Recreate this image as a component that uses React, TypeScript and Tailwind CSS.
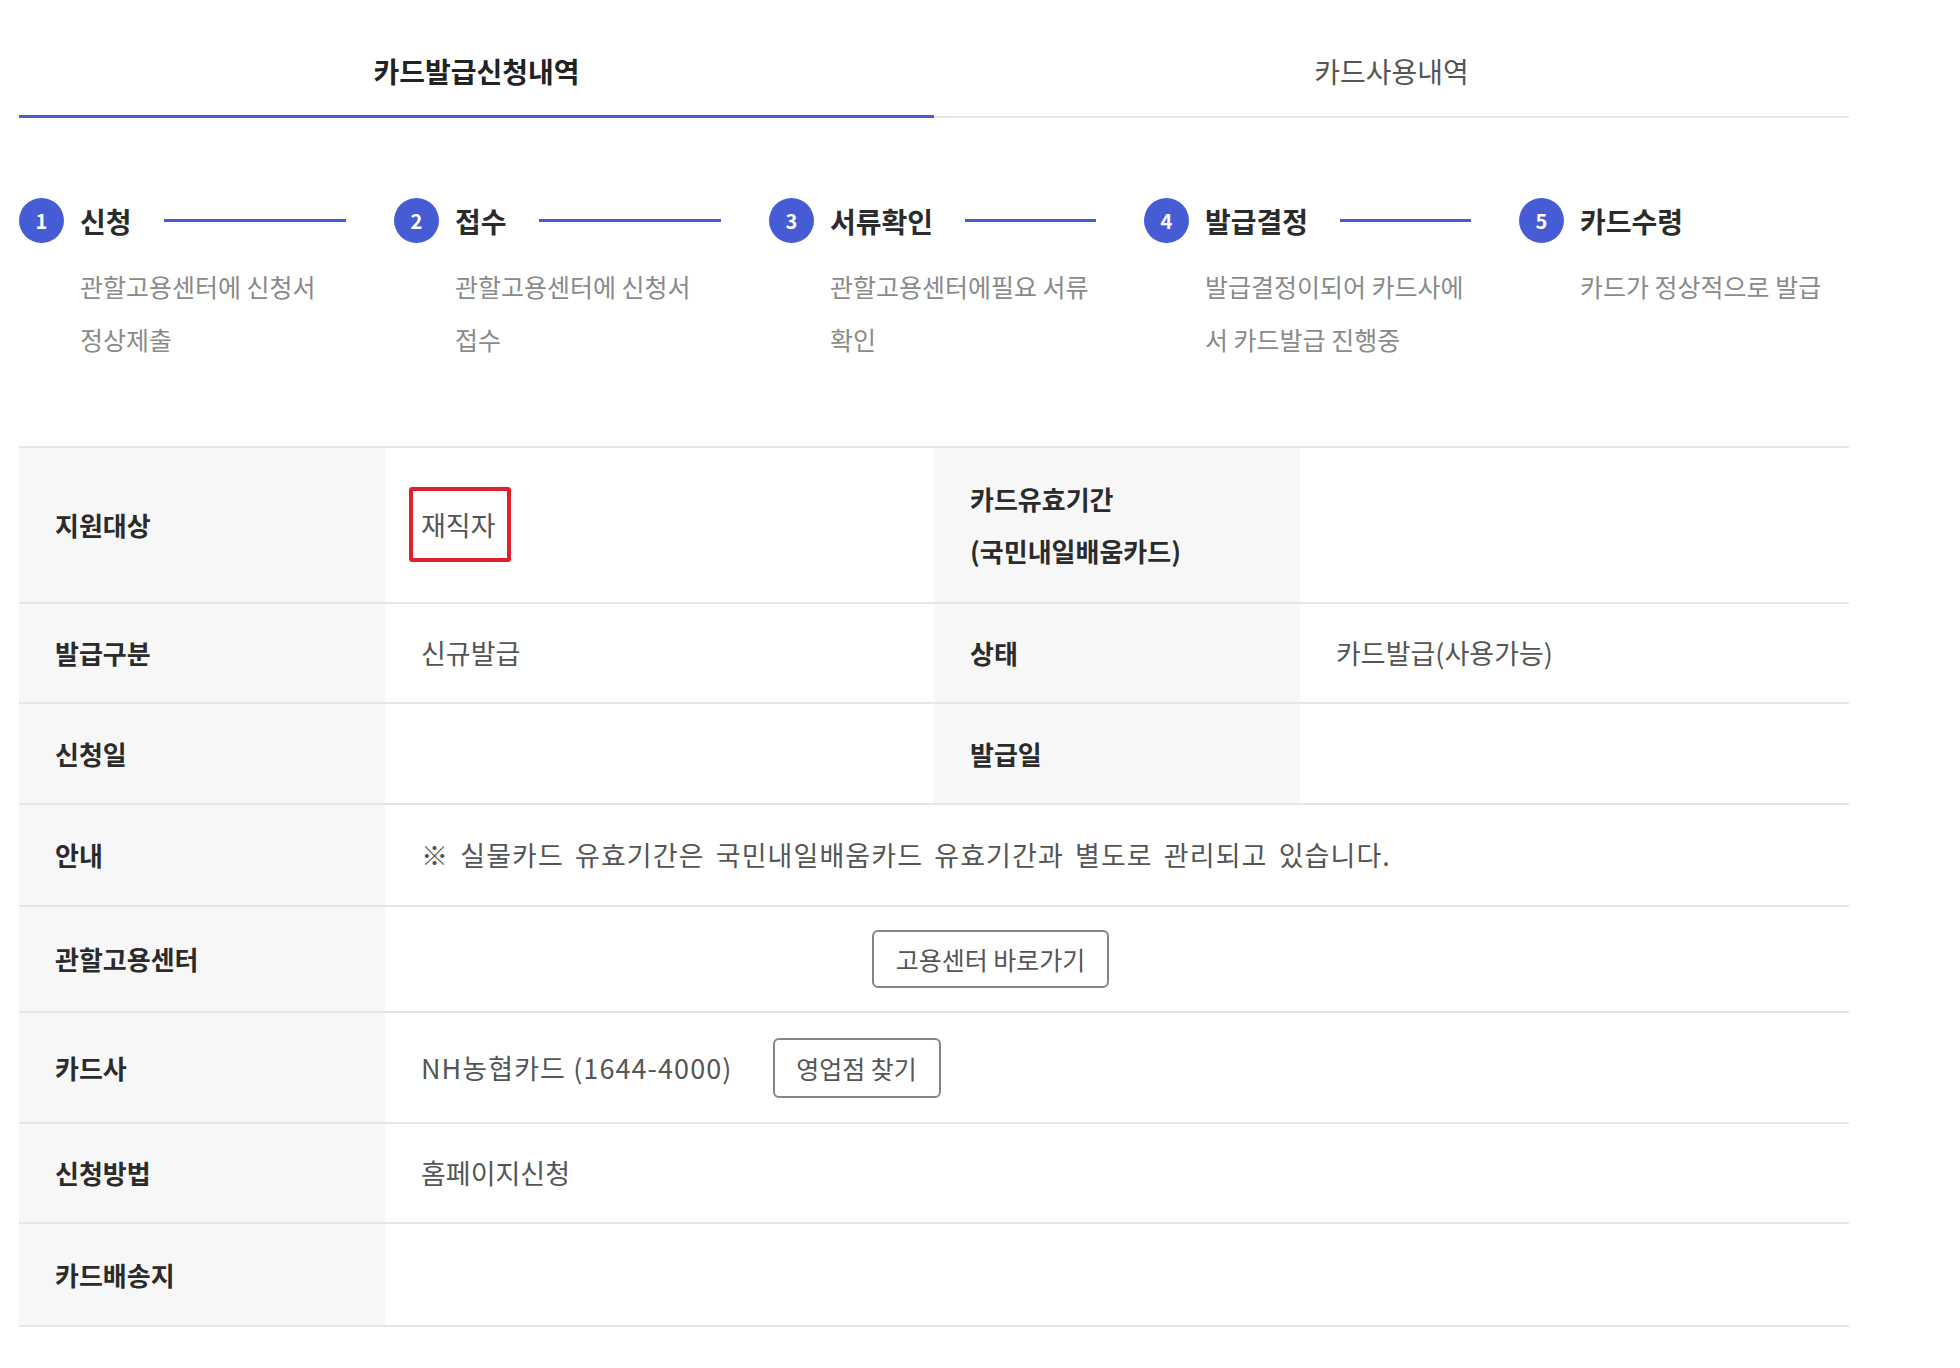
import React from 'react';

const STEPS = [
  { no: 1, title: '신청', lines: ['관할고용센터에 신청서', '정상제출'] },
  { no: 2, title: '접수', lines: ['관할고용센터에 신청서', '접수'] },
  { no: 3, title: '서류확인', lines: ['관할고용센터에필요 서류', '확인'] },
  { no: 4, title: '발급결정', lines: ['발급결정이되어 카드사에', '서 카드발급 진행중'] },
  { no: 5, title: '카드수령', lines: ['카드가 정상적으로 발급'] },
];

const ROW = 'grid grid-cols-[366px_549px_366px_1fr] border-b-2 border-[#e6e6e6]';

function Th({ children }: { children: React.ReactNode }) {
  return (
    <div className="flex items-center bg-[#f7f7f7] pl-9 text-[26px] font-bold leading-[52px] text-[#2b2b2b]">
      <div>{children}</div>
    </div>
  );
}

function Td({ children, span }: { children?: React.ReactNode; span?: boolean }) {
  return (
    <div
      className={`flex items-center pl-9 text-[27px] leading-[34px] text-[#555] ${span ? 'col-span-3' : ''}`}
    >
      {children}
    </div>
  );
}

function OutlineButton({ children, className = '' }: { children: React.ReactNode; className?: string }) {
  return (
    <button
      className={`rounded-[6px] border-2 border-[#858585] bg-white px-5 text-[25px] text-[#555] ${className}`}
    >
      {children}
    </button>
  );
}

export default function App() {
  return (
    <div className="min-h-[1368px] bg-white font-['Noto_Sans_CJK_KR','Noto_Sans',sans-serif]">
      <div className="ml-[19px] w-[1830px]">
        {/* tabs */}
        <div className="flex h-[118px] items-end">
          <div className="flex h-full w-1/2 items-start justify-center border-b-[3px] border-[#4a60cc] pt-[53px]">
            <span className="text-[28px] font-bold leading-[36px] text-[#222]">카드발급신청내역</span>
          </div>
          <div className="flex h-full w-1/2 items-start justify-center border-b-2 border-[#e6e6e6] pt-[53px]">
            <span className="text-[28px] leading-[36px] text-[#555]">카드사용내역</span>
          </div>
        </div>

        {/* steps */}
        <div className="mt-[80px] flex h-[248px] items-start">
          {STEPS.map((step, i) => (
            <div key={step.no} className="w-[375px] shrink-0">
              <div className="flex h-[45px] items-center">
                <div className="flex h-[45px] w-[45px] shrink-0 items-center justify-center rounded-full bg-[#465cd5] text-[20px] font-bold text-white">
                  {step.no}
                </div>
                <span className="ml-4 text-[28px] font-bold text-[#2b2b2b]">{step.title}</span>
                {i < STEPS.length - 1 && <div className="ml-8 mr-[48px] h-[3px] flex-1 bg-[#465cd5]" />}
              </div>
              <div className="mt-[17px] pl-[61px] text-[25px] leading-[53px] text-[#8a8a8a]">
                {step.lines.map((line) => (
                  <p key={line} className="whitespace-nowrap">
                    {line}
                  </p>
                ))}
              </div>
            </div>
          ))}
        </div>

        {/* info table */}
        <div className="border-t-2 border-[#e6e6e6]">
          <div className={`${ROW} h-[156px]`}>
            <Th>지원대상</Th>
            <Td>
              <span className="relative">
                재직자
                <span className="absolute -top-[21px] -bottom-[20px] -left-[12px] -right-[15px] rounded-[3px] border-4 border-[#e0202b]" />
              </span>
            </Td>
            <Th>
              카드유효기간
              <br />
              (국민내일배움카드)
            </Th>
            <Td />
          </div>
          <div className={`${ROW} h-[100px]`}>
            <Th>발급구분</Th>
            <Td>신규발급</Td>
            <Th>상태</Th>
            <Td>카드발급(사용가능)</Td>
          </div>
          <div className={`${ROW} h-[101px]`}>
            <Th>신청일</Th>
            <Td />
            <Th>발급일</Th>
            <Td />
          </div>
          <div className={`${ROW} h-[102px]`}>
            <Th>안내</Th>
            <Td span>
              <span className="tracking-[0.04em] [word-spacing:4px]">
                ※ 실물카드 유효기간은 국민내일배움카드 유효기간과 별도로 관리되고 있습니다.
              </span>
            </Td>
          </div>
          <div className={`${ROW} h-[106px]`}>
            <Th>관할고용센터</Th>
            <Td span>
              <OutlineButton className="ml-[451px] h-[58px] w-[237px] px-0">고용센터 바로가기</OutlineButton>
            </Td>
          </div>
          <div className={`${ROW} h-[111px]`}>
            <Th>카드사</Th>
            <Td span>
              <span className="tracking-[0.04em]">NH농협카드 (1644-4000)</span>
              <OutlineButton className="ml-[40px] h-[60px] w-[168px] px-0">영업점 찾기</OutlineButton>
            </Td>
          </div>
          <div className={`${ROW} h-[100px]`}>
            <Th>신청방법</Th>
            <Td span>홈페이지신청</Td>
          </div>
          <div className={`${ROW} h-[103px]`}>
            <Th>카드배송지</Th>
            <Td span />
          </div>
        </div>
      </div>
    </div>
  );
}
